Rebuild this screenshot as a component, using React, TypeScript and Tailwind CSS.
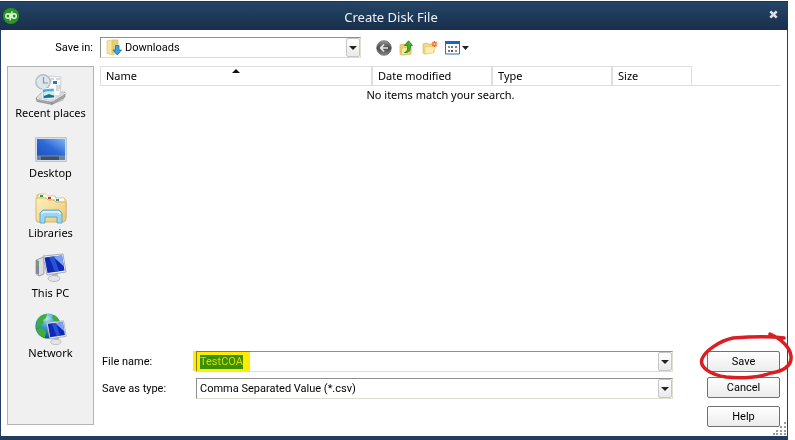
import React from 'react';

const DropArrow: React.FC = () => (
  <span className="pointer-events-none absolute inset-y-0 right-0 w-[14px] flex items-center justify-center rounded-xs border border-[#c6c6c6] bg-linear-to-b from-white to-[#e9e9e9]">
    <svg width="8" height="4" viewBox="0 0 8 4">
      <path d="M0 0h8L4 4z" fill="#222" />
    </svg>
  </span>
);

const QbLogo: React.FC = () => (
  <svg width="18" height="18" viewBox="0 0 18 18" aria-hidden="true">
    <circle cx="9" cy="9" r="8" fill="#28961f" />
    <g fill="none" stroke="#e3f5df" strokeWidth="1.4">
      <circle cx="6" cy="9" r="2.2" />
      <path d="M8.2 6.2v7.4" />
      <circle cx="12.1" cy="9" r="2.2" />
      <path d="M9.9 4.2v7" />
    </g>
  </svg>
);

const DownloadsIcon: React.FC = () => (
  <svg width="16" height="17" viewBox="0 0 16 17" aria-hidden="true">
    <path d="M6 1h6v13H6z" fill="#ecd07c" stroke="#d5b560" strokeWidth=".7" />
    <path d="M1 2l4.500-1 2.500 2v13l-7-1.500z" fill="#f7e69e" stroke="#dcc26c" strokeWidth=".7" />
    <path d="M5.500 1.500l2.200 1.700v12L5.500 14z" fill="#e2c670" />
    <path d="M9.500 6.500h3.500V11h2.500L11.200 16 7 11h2.500z" fill="#36a3e8" stroke="#1b6fb5" strokeWidth=".8" />
  </svg>
);

const BackIcon: React.FC = () => (
  <svg width="16" height="16" viewBox="0 0 16 16" aria-hidden="true">
    <defs>
      <linearGradient id="back" x1="0" y1="0" x2="0" y2="1">
        <stop offset="0" stopColor="#9b9b9b" />
        <stop offset=".5" stopColor="#484848" />
        <stop offset="1" stopColor="#8a8a8a" />
      </linearGradient>
    </defs>
    <circle cx="8" cy="8" r="7.300" fill="url(#back)" stroke="#6a6a6a" strokeWidth=".8" />
    <path d="M12 8H5M8 4.600L4.600 8 8 11.400" fill="none" stroke="#e6e6e6" strokeWidth="1.700" />
  </svg>
);

const UpFolderIcon: React.FC = () => (
  <svg width="16" height="16" viewBox="0 0 16 16" aria-hidden="true">
    <path d="M1 5l4-1 1 1h6v9l-8 1-3-1z" fill="#edd17a" stroke="#d0aa4c" strokeWidth=".7" />
    <path d="M3 8l9-1-1 7-9 1z" fill="#fbea9e" stroke="#d5b150" strokeWidth=".6" />
    <path d="M5.500 12.500c3-1 3.500-3.500 3-7H5.500L9.500 .8l4 4.700h-2.200c.5 4.500-1 8-5.800 7z" fill="#3fb32a" stroke="#187b12" strokeWidth=".8" />
  </svg>
);

const NewFolderIcon: React.FC = () => (
  <svg width="16" height="16" viewBox="0 0 16 16" aria-hidden="true">
    <path d="M1 4l4-1 1 1h6v8l-9 2-2-1z" fill="#f2d98a" stroke="#d9b45c" strokeWidth=".7" />
    <path d="M3 7l11-1-3 7-8 1z" fill="#fdeeb0" stroke="#e0c06a" strokeWidth=".6" />
    <path d="M12.500 1v6M9.500 4h6M10.400 1.900l4.200 4.200M14.600 1.900l-4.200 4.200" stroke="#f0621e" strokeWidth="1.200" />
    <circle cx="12.500" cy="4" r="1" fill="#ffdf9c" />
  </svg>
);

const ViewIcon: React.FC = () => (
  <svg width="24" height="16" viewBox="0 0 24 16" aria-hidden="true">
    <path d="M.5 1.500h14v12.500H.5z" fill="#fff" stroke="#1e73c9" />
    <path d="M0 1h15v3H0z" fill="#1768c6" />
    <path d="M3 6h2v2H3zM10 10h2v2h-2z" fill="#7d9c74" />
    <path d="M6 6h2v2H6zM3 10h2v2H3z" fill="#5c7fae" />
    <path d="M10 6h2v2h-2z" fill="#74819c" />
    <path d="M6 10h2v2H6z" fill="#9b3528" />
    <path d="M17 6h7l-3.500 4z" fill="#222" />
  </svg>
);

const RecentIcon: React.FC = () => (
  <svg width="32" height="32" viewBox="0 0 32 32" aria-hidden="true">
    <path d="M1 25l6-6h23l-2 8-11 4z" fill="#dcdddf" stroke="#a4a6a9" strokeWidth=".7" />
    <path d="M14 3l12 1-1 19-12-1z" fill="#fbfbfb" stroke="#c4c7ca" strokeWidth=".8" />
    <path d="M15 6h4M15 8h2M21 6h4M21 13h4M21 15h4M21 17h3" stroke="#9da4ab" strokeWidth=".8" />
    <path d="M18 8h4v3h-4z" fill="#2a7ea9" />
    <circle cx="8" cy="9" r="7.200" fill="#dde6ec" stroke="#b3bdc4" strokeWidth="1.400" />
    <path d="M8.500 4v6H13" fill="none" stroke="#8897a3" strokeWidth="1.200" />
    <path d="M7 16l12-1 1 10-12 1z" fill="#4faae0" stroke="#f7f7f7" />
    <path d="M8 20c4-3 7-1 11-2v4l-10 1z" fill="#c9eeee" />
    <path d="M9 23l5-2 5 2v1l-10 1z" fill="#18708f" />
    <path d="M1 25l16 3v3.500L2 28.500zM17 28l13-8v4l-13 7.500z" fill="#a2a4a7" stroke="#85878a" strokeWidth=".6" />
    <path d="M2 25.500l15 2.700 13-8" fill="none" stroke="#f2f2f2" />
  </svg>
);

const DesktopIcon: React.FC = () => (
  <svg width="32" height="32" viewBox="0 0 32 32" aria-hidden="true">
    <defs>
      <linearGradient id="desk" x1="0" y1="1" x2="1" y2="0">
        <stop offset="0" stopColor="#1f4fc0" />
        <stop offset=".5" stopColor="#2c68d6" />
        <stop offset="1" stopColor="#7fb4f5" />
      </linearGradient>
    </defs>
    <path d="M.7 4.700h30.600v23.600H.7z" fill="#dfe6ee" stroke="#aebccb" />
    <path d="M2 6h28v18H2z" fill="url(#desk)" />
    <path d="M2 23h28v4H2z" fill="#3f5168" />
    <path d="M2 23h4v4H2zM24 23h6v4h-6z" fill="#6a849c" />
    <path d="M2 23h28" stroke="#8297ad" strokeWidth=".8" />
  </svg>
);

const LibrariesIcon: React.FC = () => (
  <svg width="32" height="32" viewBox="0 0 32 32" aria-hidden="true">
    <defs>
      <linearGradient id="lib" x1="0" y1="0" x2="1" y2="1">
        <stop offset="0" stopColor="#fdf1bf" />
        <stop offset="1" stopColor="#e9c872" />
      </linearGradient>
    </defs>
    <path d="M2 4V2l2-1h7l1 2h8l1 2h8l2 2v18H2z" fill="#f5e2a2" stroke="#cdb06a" strokeWidth=".8" />
    <path d="M4 1.500h8v2.500H4z" fill="#fff" />
    <path d="M5 2h3v2H5z" fill="#1ca63c" />
    <path d="M12 3.500h8V6h-8z" fill="#fff" />
    <path d="M13 4h3v2h-3z" fill="#cf3428" />
    <path d="M20 5.500h9V8h-9z" fill="#fff" />
    <path d="M21 6h3v2h-3z" fill="#318ad2" />
    <path d="M1 5h10l2 2h6l2 2h10v18l-2 2H2l-1-2z" fill="url(#lib)" stroke="#cfac5c" strokeWidth=".8" />
    <path d="M5 30v-10l3-3h16l3 3v10h-5v-6H10v6z" fill="#9fd6ef" stroke="#58a5cd" strokeWidth=".9" />
    <path d="M6.500 21l2-2h15l2 2" fill="none" stroke="#e4f8ff" strokeWidth="1.400" />
  </svg>
);

const Monitor: React.FC = () => (
  <>
    <path d="M17 20h6l-1 6h-4z" fill="#b3b8be" />
    <ellipse cx="19" cy="25.500" rx="6" ry="3" fill="#e2e4e7" stroke="#a4a9af" strokeWidth=".7" />
    <path d="M8 3l20-2 3 18-19 3z" fill="#eceef0" stroke="#979ca3" strokeWidth=".8" />
    <path d="M9.500 4.500l17.500-2 2.500 15-17 2.500z" fill="#1029b4" />
    <path d="M18 3.500l9-1 2 11z" fill="#7da0f2" />
    <path d="M14 4l5-.5 5 14.500-4 1z" fill="#2a53d4" />
  </>
);

const ThisPcIcon: React.FC = () => (
  <svg width="32" height="32" viewBox="0 0 32 32" aria-hidden="true">
    <path d="M1 7l8-3v17l-5 2-3-2z" fill="#d9dbde" stroke="#8c9198" strokeWidth=".8" />
    <path d="M1 7l3 1v14l-3-2z" fill="#82888e" />
    <path d="M2 10h2v2H2z" fill="#42c634" />
    <Monitor />
  </svg>
);

const NetworkIcon: React.FC = () => (
  <svg width="32" height="32" viewBox="0 0 32 32" aria-hidden="true">
    <defs>
      <radialGradient id="globe" cx=".45" cy=".2" r=".85">
        <stop offset="0" stopColor="#b5e6f6" />
        <stop offset=".4" stopColor="#3c9ccb" />
        <stop offset="1" stopColor="#0b4584" />
      </radialGradient>
    </defs>
    <circle cx="13" cy="13" r="12.600" fill="url(#globe)" />
    <path d="M3 6c3-4 6-5 9-5l-1 4-3 2 1 3-4 2-2 4-2-2zM1 16l6-1 4 4-1 6C5 24 2 20 1 16zM18 2c4 1 6 4 7 8l-5-2-3-3z" fill="#3fae36" />
    <g transform="translate(4.500 7) scale(.86)">
      <Monitor />
    </g>
  </svg>
);

const places = [
  { label: 'Recent places', icon: <RecentIcon /> },
  { label: 'Desktop', icon: <DesktopIcon /> },
  { label: 'Libraries', icon: <LibrariesIcon /> },
  { label: 'This PC', icon: <ThisPcIcon /> },
  { label: 'Network', icon: <NetworkIcon /> },
];

const fieldClass = 'relative flex h-[21px] border border-[#deded2] border-t-[#8e8f8f] border-l-[#8e8f8f] bg-white';
const selectClass = 'w-full appearance-none bg-transparent pr-4 outline-none';
const buttonClass = 'h-[21px] w-full rounded-xs border bg-linear-to-b from-white to-[#ececec]';
const headClass = 'border-r-2 border-[#dedede] pl-[5px] font-normal';

const App: React.FC = () => {
  return (
    <div className="flex min-h-screen flex-col bg-white pt-px pr-[7px] font-[Roboto,'Liberation_Sans',sans-serif] text-[11px] leading-4 text-black">
      <div className="flex flex-1 flex-col border-b-4 border-[#203c5e]">
        {/* Title bar */}
        <header className="flex h-[29px] items-center justify-between border-t border-[#123a50] bg-linear-to-b from-[#244567] to-[#182f4b] px-[2px]">
          <QbLogo />
          <h1 className="pt-[2px] font-['Noto_Sans','Open_Sans',sans-serif] text-[13px] text-[#edf3f9]">Create Disk File</h1>
          <button type="button" aria-label="Close" className="flex w-6 items-center justify-center pb-1">
            <svg width="9" height="9" viewBox="0 0 9 9">
              <path d="M1.300 1.300l6.400 6.400M7.700 1.300L1.300 7.700" stroke="#dce1e7" strokeWidth="2.600" />
            </svg>
          </button>
        </header>

        <main className="relative flex flex-1 flex-col border-x border-[#23415f] pr-[6px] pb-[11px] pl-[6px]">
          {/* Folder and toolbar */}
          <div className="flex h-9 items-end pb-2">
            <div className="flex h-[21px] w-full items-center">
              <label htmlFor="folder" className="w-[93px] pr-[7px] text-right">Save in:</label>
              <div className={`${fieldClass} w-[261px]`}>
                <span className="pointer-events-none absolute top-[1px] left-[5px]">
                  <DownloadsIcon />
                </span>
                <select id="folder" className={`${selectClass} pl-6`}>
                  <option>Downloads</option>
                </select>
                <DropArrow />
              </div>
              <div className="ml-[15px] flex gap-[7px]">
                <button type="button" aria-label="Back"><BackIcon /></button>
                <button type="button" aria-label="Up one level"><UpFolderIcon /></button>
                <button type="button" aria-label="New folder"><NewFolderIcon /></button>
                <button type="button" aria-label="View menu"><ViewIcon /></button>
              </div>
            </div>
          </div>

          <div className="flex flex-1 gap-[6px]">
            {/* Places bar */}
            <nav className="w-[87px] border border-[#b3b3b3] bg-[#f0f0f0] pt-[6px] font-['Noto_Sans','Open_Sans',sans-serif]">
              {places.map((place) => (
                <button key={place.label} type="button" className="flex h-[60px] w-full flex-col items-center whitespace-nowrap">
                  {place.icon}
                  <span>{place.label}</span>
                </button>
              ))}
            </nav>

            <div className="flex flex-1 flex-col">
              {/* File list */}
              <div className="flex-1">
                <table className="w-full table-fixed border-separate border-spacing-0 text-left font-['Noto_Sans','Open_Sans',sans-serif]">
                  <thead>
                    <tr className="h-5 [&>th]:border-y [&>th]:border-y-[#dedede]">
                      <th className={`${headClass} relative w-[273px] border-l`}>
                        Name
                        <svg className="absolute top-[2px] left-[131px]" width="8" height="4" viewBox="0 0 8 4">
                          <path d="M0 4h8L4 0z" fill="#111" />
                        </svg>
                      </th>
                      <th className={`${headClass} w-[120px]`}>Date modified</th>
                      <th className={`${headClass} w-[120px]`}>Type</th>
                      <th className="w-[79px] border-r border-[#dedede] pl-[5px] font-normal">Size</th>
                      <td className="border-b border-[#dedede]" />
                    </tr>
                  </thead>
                  <tbody>
                    <tr>
                      <td colSpan={5} className="pt-px text-center">No items match your search.</td>
                    </tr>
                  </tbody>
                </table>
              </div>

              {/* File name, type and actions */}
              <form className="-mb-[2px] flex justify-between pr-px" onSubmit={(e) => e.preventDefault()}>
                <div className="flex flex-1 flex-col gap-[6px]">
                  <div className="flex items-center">
                    <label htmlFor="file-name" className="w-24 pl-[2px]">File name:</label>
                    <div className={`${fieldClass} flex-1 items-center pl-[3px]`}>
                      <input
                        id="file-name"
                        type="text"
                        defaultValue="TestCOA"
                        className="field-sizing-content h-[14px] bg-[#389b14] text-[#d5ee00] outline-none"
                      />
                      <span className="pointer-events-none absolute -top-px -left-1 h-5 w-[57px] bg-[#ffec00] mix-blend-multiply" />
                      <DropArrow />
                    </div>
                  </div>
                  <div className="flex items-center">
                    <label htmlFor="file-type" className="w-24 pl-[2px]">Save as type:</label>
                    <div className={`${fieldClass} flex-1`}>
                      <select id="file-type" className={`${selectClass} pl-[3px]`}>
                        <option>Comma Separated Value (*.csv)</option>
                      </select>
                      <DropArrow />
                    </div>
                  </div>
                </div>

                <div className="ml-[34px] flex w-[73px] flex-col gap-[5px]">
                  <div className="relative">
                    <button type="submit" className={`${buttonClass} border-[#3c7fb1]`}>Save</button>
                    <svg className="pointer-events-none absolute -top-5 -left-2 z-10" width="96" height="52" viewBox="0 0 96 52" aria-hidden="true">
                      <path
                        d="M85 7C70 5 47 6 34 7C20 10 6 20 3 28C0 37 13 44 27 46C44 48 62 46 72 42C84 40 93 35 92 25C91 16 82 8 71 3"
                        fill="none"
                        stroke="#d91f23"
                        strokeWidth="3.5"
                        strokeLinecap="round"
                        strokeLinejoin="round"
                      />
                    </svg>
                  </div>
                  <button type="button" className={`${buttonClass} border-[#707070]`}>Cancel</button>
                  <button type="button" className={`${buttonClass} mt-[3px] border-[#707070]`}>Help</button>
                </div>
              </form>
            </div>
          </div>

          {/* Resize grip */}
          <svg className="absolute right-0 bottom-0" width="15" height="15" viewBox="0 0 15 15" aria-hidden="true">
            <path
              d="M12 1h2v2h-2zM12 5h2v2h-2zM12 9h2v2h-2zM12 12h2v2h-2zM8 5h2v2H8zM8 9h2v2H8zM8 12h2v2H8zM4 9h2v2H4zM4 12h2v2H4zM1 12h2v2H1z"
              fill="#9a9a9a"
            />
          </svg>
        </main>
      </div>
    </div>
  );
};

export default App;
